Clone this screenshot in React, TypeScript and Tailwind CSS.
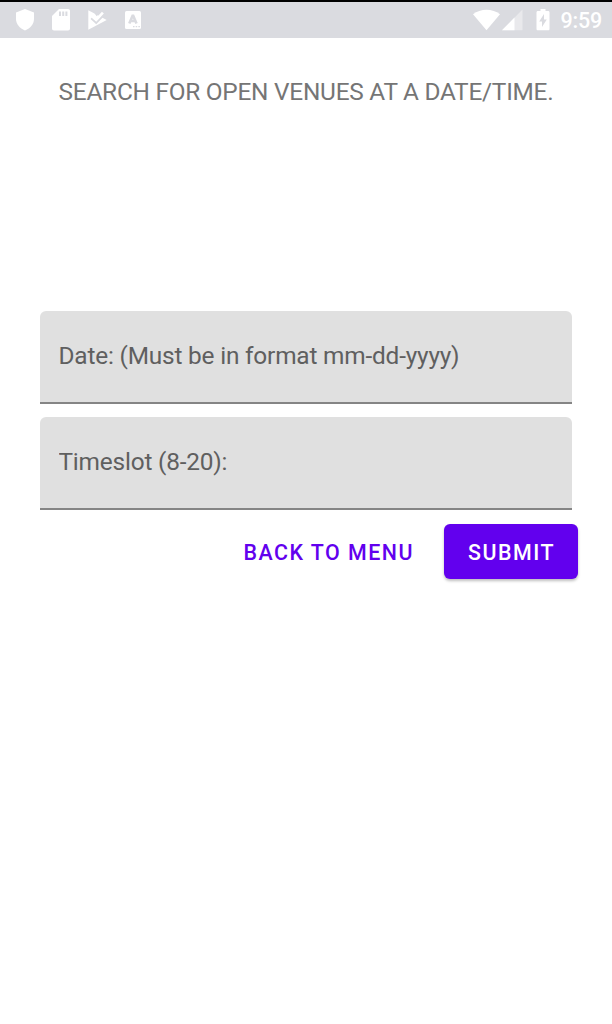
import React from "react";

function StatusBar() {
  return (
    <header className="flex h-[38px] items-center justify-between border-t-2 border-black bg-[#dadbe0] pr-[10px] pl-[15px] text-white">
      <div className="flex items-center">
        <svg width="20" height="24" viewBox="0 0 20 24" fill="currentColor">
          <path d="M10 1 19 4.400V11c0 5-3.600 9.300-9 11.400C4.600 20.300 1 16 1 11V4.400Z" />
        </svg>
        <svg className="ml-[17px]" width="18" height="24" viewBox="0 0 18 24">
          <path fill="currentColor" d="M7 1h9c1.200 0 2 .8 2 2v17.500c0 1.200-.8 2-2 2H2c-1.200 0-2-.8-2-2V8Z" />
          <path fill="#dadbe0" d="M7 3.500h2v4.500H7zM10.200 3.500h2v4.500h-2zM13.400 3.500h2v4.500h-2z" />
        </svg>
        <svg className="ml-[18px]" width="20" height="24" viewBox="0 0 20 24">
          <path fill="currentColor" d="M.3 2.200 18.700 12 .3 21.800Z" />
          <path fill="none" stroke="#dadbe0" strokeWidth="2" d="m3.200 10.200 5 4.600 8-8.300" />
          <path fill="#dadbe0" d="m6.500 5.200 2.200 3 3.300-3.700Z" />
          <path fill="none" stroke="currentColor" strokeWidth="2.600" d="m4.200 8.200 4 3.800 6.700-7.300" />
        </svg>
        <svg className="ml-[17px]" width="17" height="24" viewBox="0 0 17 24">
          <rect x="0" y="3" width="16" height="18" rx="1.500" fill="currentColor" />
          <path fill="none" stroke="#dadbe0" strokeWidth="2.600" strokeLinejoin="bevel" d="M4.300 15.500 7.900 7l3.600 8.500M5.700 13h4.600" />
          <path fill="#dadbe0" d="M8 18h1.500v1.200H8zM10.700 18h1.500v1.200h-1.500zM13.400 18h1.500v1.200h-1.500z" />
        </svg>
      </div>
      <div className="flex items-center">
        <svg width="27" height="24" viewBox="0 0 27 24" fill="currentColor">
          <path d="M0 6.200C7.500.1 19.500.1 27 6.200L13.500 22.200Z" />
        </svg>
        <svg className="ml-[2px]" width="21" height="24" viewBox="0 0 21 24" fill="currentColor">
          <path opacity=".4" d="M20.500 1.500v20.700H0Z" />
          <path d="M12.500 9.600v12.600H0Z" />
        </svg>
        <svg className="ml-[13px]" width="14" height="24" viewBox="0 0 14 24">
          <path fill="currentColor" d="M4.500 1h5v2H12c1 0 1.500.5 1.500 1.500v16.200c0 1-.5 1.500-1.500 1.500H2c-1 0-1.500-.5-1.500-1.500V4.500C.5 3.500 1 3 2 3h2.500Z" />
          <path fill="#dadbe0" d="M8 6 3.200 13.500H6V19l4.800-7.500H8Z" />
        </svg>
        <span className="ml-[10px] pt-[2px] text-[21.500px] leading-6 font-medium tracking-[-0.200px]">9:59</span>
      </div>
    </header>
  );
}

function Field({ label }: { label: string }) {
  return (
    <input
      aria-label={label}
      placeholder={label}
      className="block h-[93px] w-full rounded-t-[6px] border-b-2 border-[#858585] bg-[#e0e0e0] px-[18.500px] pb-[2px] text-[24.400px] tracking-[-0.190px] text-[#5f5f5f] outline-none placeholder:text-[#5f5f5f] placeholder:opacity-100"
    />
  );
}

export default function App() {
  return (
    <div className="min-h-screen bg-white font-[Roboto,sans-serif]">
      <StatusBar />
      <main className="px-10">
        <h1 className="pt-[38px] text-center text-[24.400px] leading-8 tracking-[-0.250px] whitespace-nowrap text-[#757575]">
          SEARCH FOR OPEN VENUES AT A DATE/TIME.
        </h1>
        <form className="mt-[203px]" onSubmit={(e) => e.preventDefault()}>
          <div className="flex flex-col gap-[12.500px]">
            <Field label="Date: (Must be in format mm-dd-yyyy)" />
            <Field label="Timeslot (8-20):" />
          </div>
          <div className="-mr-[6px] mt-[14px] flex h-[55px] justify-end">
            <button type="button" className="mr-[30px] pt-[4px] text-[21.400px] font-medium tracking-[1.500px] whitespace-nowrap text-[#6200ee]">
              BACK TO MENU
            </button>
            <button type="submit" className="w-[134px] rounded-[6px] bg-[#6200ee] pt-[4px] pl-[1px] text-[21.400px] font-medium tracking-[1.500px] text-white shadow-[0_2px_3px_rgba(0,0,0,0.26)]">
              SUBMIT
            </button>
          </div>
        </form>
      </main>
    </div>
  );
}
